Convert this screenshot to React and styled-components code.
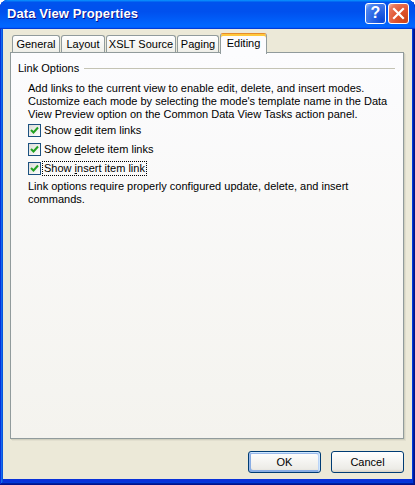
import styled, { createGlobalStyle } from "styled-components";

const GlobalStyle = createGlobalStyle`
  body {
    margin: 0;
    background: #ffffff;
  }
`;

const Window = styled.div`
  width: 415px;
  height: 485px;
  box-sizing: border-box;
  display: flex;
  flex-direction: column;
  background: #0831d9;
  border-radius: 8px 8px 0 0;
  box-shadow: inset -1px -1px #00138c, inset 1px 1px #0831d9,
    inset -2px -2px #001ea0, inset 2px 2px #166aee,
    inset -3px -3px #003bda, inset 3px 3px #0855dd;
  font-family: "Liberation Sans", Arial, sans-serif;
  font-size: 11px;
  color: #000;
`;

const TitleBar = styled.div`
  height: 29px;
  box-sizing: border-box;
  display: flex;
  align-items: center;
  padding: 0 6px 3px 7px;
  border-radius: 8px 8px 0 0;
  background: linear-gradient(
    180deg,
    #0997ff,
    #0053ee 8%,
    #0050ee 40%,
    #0066ff 88%,
    #0066ff 93%,
    #005bff 95%,
    #003dd7 96%,
    #003dd7
  );
`;

const Title = styled.div`
  flex: 1;
  color: #fff;
  font-weight: bold;
  font-size: 13px;
  letter-spacing: 0.1px;
  text-shadow: 1px 1px #0f1089;
`;

const Controls = styled.div`
  display: flex;
  gap: 2px;
`;

const CaptionButton = styled.div`
  width: 21px;
  height: 21px;
  box-sizing: border-box;
  border: 1px solid #fff;
  border-radius: 3px;
  display: flex;
  align-items: center;
  justify-content: center;
  color: #fff;
  font-weight: bold;
  font-size: 16px;
  background: ${(p) =>
    p.$close
      ? "radial-gradient(circle at 85% 85%, #cc4419 0, #e0542f 45%, #e8765a 80%, #f3b9a6 100%)"
      : "radial-gradient(circle at 85% 85%, #0a48d8 0, #2a66e4 45%, #4d84ef 80%, #a9c3f6 100%)"};
`;

const Body = styled.div`
  flex: 1;
  display: flex;
  flex-direction: column;
  margin: 0 3px 6px;
  padding: 4px 8px 0 7px;
  background: #ece9d8;
`;

const TabRow = styled.div`
  height: 19px;
  display: flex;
  align-items: flex-end;
  gap: 1px;
  padding-left: 2px;
  position: relative;
  z-index: 1;
`;

const Tab = styled.div`
  width: ${(p) => p.$w}px;
  height: ${(p) => (p.$active ? 21 : 17)}px;
  margin-bottom: ${(p) => (p.$active ? -2 : 0)}px;
  box-sizing: border-box;
  border: 1px solid #919b9c;
  border-bottom: none;
  border-top-color: ${(p) => (p.$active ? "#e68b2c" : "#919b9c")};
  border-radius: 3px 3px 0 0;
  display: flex;
  justify-content: center;
  padding-top: ${(p) => (p.$active ? 3 : 2)}px;
  line-height: 13px;
  position: relative;
  z-index: ${(p) => (p.$active ? 2 : 0)};
  background: ${(p) =>
    p.$active
      ? "#fcfcfe"
      : "linear-gradient(180deg, #fff, #fafaf9 26%, #f0f0ea 95%, #ecebe5)"};
  box-shadow: ${(p) => (p.$active ? "inset 0 2px #ffc83c" : "none")};
`;

const Panel = styled.div`
  flex: 1;
  border: 1px solid #919b9c;
  background: linear-gradient(180deg, #fcfcfe, #f4f3ee);
  box-shadow: 1px 1px #d0d0bf, 2px 2px #e2dfcf;
  padding: 9px 8px 0 7px;
`;

const GroupHeader = styled.div`
  display: flex;
  align-items: center;
  gap: 5px;
  line-height: 13px;
`;

const Rule = styled.div`
  flex: 1;
  height: 1px;
  margin-top: -1px;
  background: #c4c3b4;
`;

const Text = styled.div`
  margin: ${(p) => p.$top}px 0 0 10px;
  line-height: 13px;
  white-space: nowrap;
`;

const CheckRow = styled.div`
  height: 19px;
  margin-left: 10px;
  display: flex;
  align-items: center;
  gap: 3px;
`;

const Box = styled.div`
  width: 13px;
  height: 13px;
  box-sizing: border-box;
  border: 1px solid #1c5180;
  background: linear-gradient(135deg, #dcdcd7, #ffffff);
  display: flex;
  align-items: center;
  justify-content: center;
`;

const Label = styled.span`
  line-height: 13px;
  outline: ${(p) => (p.$focus ? "1px dotted #000" : "none")};
  outline-offset: 0;
  padding: 0 1px;
  margin-left: -1px;

  u {
    text-decoration: underline;
    text-underline-offset: 1px;
  }
`;

const Footer = styled.div`
  display: flex;
  justify-content: flex-end;
  gap: 10px;
  padding: 12px 0 6px;
`;

const Button = styled.div`
  width: 73px;
  height: 22px;
  box-sizing: border-box;
  border: 1px solid #003c74;
  border-radius: 3px;
  display: flex;
  align-items: center;
  justify-content: center;
  background: linear-gradient(180deg, #fff, #ecebe6 86%, #d6d0c5);
  box-shadow: ${(p) =>
    p.$default
      ? "inset -1px 1px #cee7ff, inset 1px 2px #98b8ea, inset -2px 2px #bcd4f6, inset 1px -1px #89ade4, inset 2px -2px #89ade4"
      : "none"};
`;

const Check = () => (
  <svg width="9" height="9" viewBox="0 0 9 9">
    <path d="M1 4 L3.5 6.5 L8 1.5" fill="none" stroke="#21a121" strokeWidth="2" />
  </svg>
);

const tabs = [
  { label: "General", w: 48 },
  { label: "Layout", w: 44 },
  { label: "XSLT Source", w: 70 },
  { label: "Paging", w: 42 },
  { label: "Editing", w: 47, active: true },
];

export default function App() {
  return (
    <>
      <GlobalStyle />
      <Window>
        <TitleBar>
          <Title>Data View Properties</Title>
          <Controls>
            <CaptionButton>?</CaptionButton>
            <CaptionButton $close>
              <svg width="13" height="13" viewBox="0 0 13 13">
                <path d="M2 2 L11 11 M11 2 L2 11" stroke="#fff" strokeWidth="2.2" strokeLinecap="square" />
              </svg>
            </CaptionButton>
          </Controls>
        </TitleBar>
        <Body>
          <TabRow>
            {tabs.map((t) => (
              <Tab key={t.label} $w={t.w} $active={t.active}>
                {t.label}
              </Tab>
            ))}
          </TabRow>
          <Panel>
            <GroupHeader>
              Link Options
              <Rule />
            </GroupHeader>
            <Text $top={7}>
              Add links to the current view to enable edit, delete, and insert modes.
              <br />
              Customize each mode by selecting the mode's template name in the Data
              <br />
              View Preview option on the Common Data View Tasks action panel.
            </Text>
            <CheckRow>
              <Box><Check /></Box>
              <Label>Show <u>e</u>dit item links</Label>
            </CheckRow>
            <CheckRow>
              <Box><Check /></Box>
              <Label>Show <u>d</u>elete item links</Label>
            </CheckRow>
            <CheckRow>
              <Box><Check /></Box>
              <Label $focus>Show <u>i</u>nsert item link</Label>
            </CheckRow>
            <Text $top={2}>
              Link options require properly configured update, delete, and insert
              <br />
              commands.
            </Text>
          </Panel>
          <Footer>
            <Button $default>OK</Button>
            <Button>Cancel</Button>
          </Footer>
        </Body>
      </Window>
    </>
  );
}
